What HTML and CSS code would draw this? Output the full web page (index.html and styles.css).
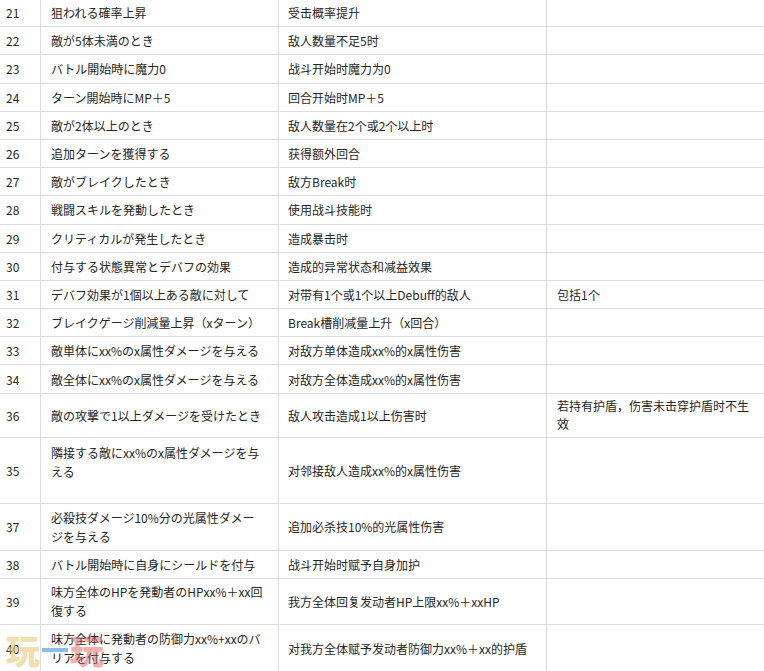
FILE: index.html
```html
<!DOCTYPE html>
<html lang="ja">
<head>
<meta charset="utf-8">
<title>スキル用語対照表</title>
<link rel="stylesheet" href="styles.css">
</head>
<body>
<div class="page">
<table class="tbl">
<colgroup>
<col class="c-num"><col class="c-jp"><col class="c-cn"><col class="c-note">
</colgroup>
<tbody>
<tr><td class="num">21</td><td class="jp">狙われる確率上昇</td><td class="cn">受击概率提升</td><td class="note"></td></tr>
<tr><td class="num">22</td><td class="jp">敵が5体未満のとき</td><td class="cn">敌人数量不足5时</td><td class="note"></td></tr>
<tr><td class="num">23</td><td class="jp">バトル開始時に魔力0</td><td class="cn">战斗开始时魔力为0</td><td class="note"></td></tr>
<tr><td class="num">24</td><td class="jp">ターン開始時にMP＋5</td><td class="cn">回合开始时MP＋5</td><td class="note"></td></tr>
<tr><td class="num">25</td><td class="jp">敵が2体以上のとき</td><td class="cn">敌人数量在2个或2个以上时</td><td class="note"></td></tr>
<tr><td class="num">26</td><td class="jp">追加ターンを獲得する</td><td class="cn">获得额外回合</td><td class="note"></td></tr>
<tr><td class="num">27</td><td class="jp">敵がブレイクしたとき</td><td class="cn">敌方Break时</td><td class="note"></td></tr>
<tr><td class="num">28</td><td class="jp">戦闘スキルを発動したとき</td><td class="cn">使用战斗技能时</td><td class="note"></td></tr>
<tr><td class="num">29</td><td class="jp">クリティカルが発生したとき</td><td class="cn">造成暴击时</td><td class="note"></td></tr>
<tr><td class="num">30</td><td class="jp">付与する状態異常とデバフの効果</td><td class="cn">造成的异常状态和减益效果</td><td class="note"></td></tr>
<tr><td class="num">31</td><td class="jp">デバフ効果が1個以上ある敵に対して</td><td class="cn">对带有1个或1个以上Debuff的敌人</td><td class="note">包括1个</td></tr>
<tr><td class="num">32</td><td class="jp">ブレイクゲージ削減量上昇（xターン）</td><td class="cn">Break槽削减量上升（x回合）</td><td class="note"></td></tr>
<tr><td class="num">33</td><td class="jp">敵単体にxx%のx属性ダメージを与える</td><td class="cn">对敌方单体造成xx%的x属性伤害</td><td class="note"></td></tr>
<tr><td class="num">34</td><td class="jp">敵全体にxx%のx属性ダメージを与える</td><td class="cn">对敌方全体造成xx%的x属性伤害</td><td class="note"></td></tr>
<tr class="r36"><td class="num">36</td><td class="jp">敵の攻撃で1以上ダメージを受けたとき</td><td class="cn">敌人攻击造成1以上伤害时</td><td class="note note-wrap">若持有护盾，伤害未击穿护盾时不生<br>效</td></tr>
<tr class="r35"><td class="num">35</td><td class="jp jp-raised">隣接する敵にxx%のx属性ダメージを与<br>える</td><td class="cn">对邻接敌人造成xx%的x属性伤害</td><td class="note"></td></tr>
<tr class="r37"><td class="num">37</td><td class="jp">必殺技ダメージ10%分の光属性ダメー<br>ジを与える</td><td class="cn">追加必杀技10%的光属性伤害</td><td class="note"></td></tr>
<tr><td class="num">38</td><td class="jp">バトル開始時に自身にシールドを付与</td><td class="cn">战斗开始时赋予自身加护</td><td class="note"></td></tr>
<tr class="r39"><td class="num">39</td><td class="jp">味方全体のHPを発動者のHPxx%＋xx回<br>復する</td><td class="cn">我方全体回复发动者HP上限xx%＋xxHP</td><td class="note"></td></tr>
<tr class="r40"><td class="num">40</td><td class="jp">味方全体に発動者の防御力xx%+xxのバ<br>リアを付与する</td><td class="cn">对我方全体赋予发动者防御力xx%＋xx的护盾</td><td class="note"></td></tr>
</tbody>
</table>
<div class="watermark" aria-hidden="true"><span class="wm-a">玩</span><span class="wm-b"></span><span class="wm-c">玩</span></div>
</div>
</body>
</html>
```
FILE: styles.css
```css
html, body {
  margin: 0;
  padding: 0;
  background: #ffffff;
}
body {
  width: 764px;
  height: 671px;
  overflow: hidden;
}
.page {
  position: relative;
  width: 764px;
  height: 671px;
  overflow: hidden;
}
.tbl {
  border-collapse: collapse;
  table-layout: fixed;
  width: 766px;
  margin: -2px 0 0 -1px;
  font-family: "Noto Sans CJK SC", "Noto Sans CJK JP", sans-serif;
  font-size: 12px;
  color: #262626;
}
.c-num { width: 41px; }
.c-jp { width: 238px; }
.c-cn { width: 268px; }
.c-note { width: 219px; }
.tbl tr { height: 28.2px; }
.tbl td {
  border: 1px solid #dcdcdc;
  padding: 0 9px;
  line-height: 19px;
  vertical-align: middle;
  white-space: nowrap;
  overflow: hidden;
}
.tbl td.num { padding-left: 6px; }
.tbl td.jp {
  font-family: "Noto Sans CJK JP", "Noto Sans CJK SC", sans-serif;
  padding-left: 10px;
}
.tbl td.note { border-right: none; padding-left: 10px; }
.tbl td.note-wrap { line-height: 18px; }
.tbl td.jp-raised { padding-bottom: 16px; }
.tbl tr.r36 { height: 44px; }
.tbl tr.r35 { height: 66px; }
.tbl tr.r37 { height: 47px; }
.tbl tr.r39 { height: 46px; }
.tbl tr.r40 { height: 48px; }
.watermark {
  position: absolute;
  left: 6px;
  top: 630px;
  display: flex;
  align-items: center;
  font-family: "Noto Sans CJK SC", sans-serif;
  font-weight: 900;
  font-size: 34px;
  line-height: 40px;
  pointer-events: none;
}
.wm-a { color: rgba(232, 196, 100, 0.55); }
.wm-b {
  width: 26px;
  height: 4px;
  margin: 0 2px;
  background: rgba(110, 175, 220, 0.8);
}
.wm-c { color: rgba(225, 95, 95, 0.5); }
```
